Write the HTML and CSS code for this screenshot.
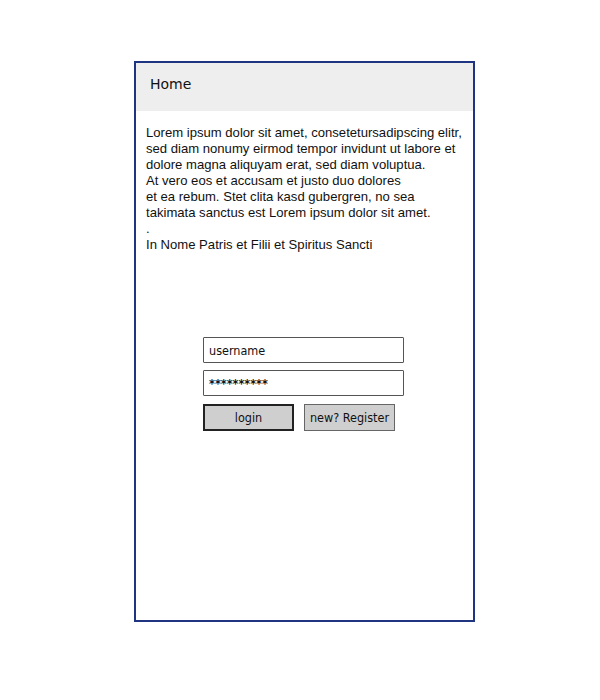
FILE: index.html
```html
<!DOCTYPE html>
<html>
<head>
<meta charset="utf-8">
<link rel="stylesheet" href="styles.css">
</head>
<body>
<div class="frame">
  <div class="header"><span class="title">Home</span></div>
  <div class="content">
    <p class="text">Lorem ipsum dolor sit amet, consetetursadipscing elitr,<br>sed diam nonumy eirmod tempor invidunt ut labore et<br>dolore magna aliquyam erat, sed diam voluptua.<br>At vero eos et accusam et justo duo dolores<br>et ea rebum. Stet clita kasd gubergren, no sea<br>takimata sanctus est Lorem ipsum dolor sit amet.<br>.<br>In Nome Patris et Filii et Spiritus Sancti</p>
    <div class="form">
      <div class="field">username</div>
      <div class="field pw">**********</div>
      <div class="buttons">
        <div class="btn primary">login</div>
        <div class="btn">new? Register</div>
      </div>
    </div>
  </div>
</div>
</body>
</html>
```
FILE: styles.css
```css
html, body { margin: 0; padding: 0; background: #fff; }
.frame {
  margin: 61px 0 0 134px;
  width: 337px;
  height: 557px;
  border: 2px solid #1f3582;
  display: flex;
  flex-direction: column;
}
.header {
  height: 48px;
  background: #eeeeee;
  display: flex;
  align-items: center;
  padding-left: 14px;
}
.title {
  font-family: "DejaVu Sans", sans-serif;
  font-size: 14px;
  color: #111;
  margin-top: -7px;
}
.content { padding: 14px 10px 0 10px; }
.text {
  margin: 0;
  font-family: "Liberation Sans", Arial, sans-serif;
  font-size: 13.1px;
  line-height: 16px;
  color: #111;
}
.form {
  margin: 84px 0 0 57px;
  width: 201px;
  display: flex;
  flex-direction: column;
  gap: 7px;
}
.field {
  box-sizing: border-box;
  height: 26px;
  border: 1.5px solid #555;
  border-radius: 1px;
  padding-left: 5px;
  display: flex;
  align-items: center;
  font-family: "DejaVu Sans Condensed", "DejaVu Sans", sans-serif;
  font-size: 12.5px;
  color: #111;
}
.field.pw { font-weight: bold; }
.buttons { display: flex; gap: 10px; margin-top: 1px; }
.btn {
  box-sizing: border-box;
  width: 91px;
  height: 27px;
  background: #cfcfcf;
  border: 1.5px solid #666;
  display: flex;
  align-items: center;
  justify-content: center;
  font-family: "DejaVu Sans Condensed", "DejaVu Sans", sans-serif;
  font-size: 12.5px;
  color: #111;
}
.btn.primary { border: 2px solid #222; }
```
